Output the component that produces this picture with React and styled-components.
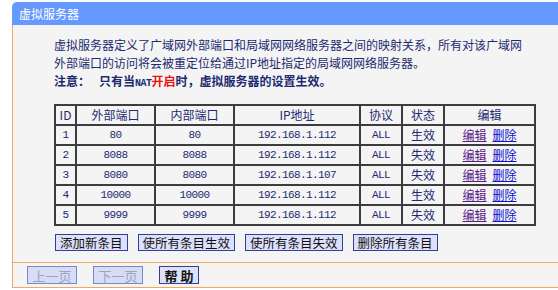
import React from 'react'
import styled, { createGlobalStyle } from 'styled-components'

const GlobalStyle = createGlobalStyle`
  body {
    margin: 0;
    background: #fff;
    font-family: "Noto Sans CJK SC", "Liberation Sans", sans-serif;
    overflow: hidden;
  }
`

const Panel = styled.div`
  margin: 2px 0 0 12px;
  width: 546px;
`

const TitleBar = styled.div`
  height: 23px;
  background: #6699ff;
  border-top-left-radius: 5px;
  color: #fff;
  font-size: 12px;
  line-height: 23px;
  padding-left: 7px;
`

const Body = styled.div`
  background: #f4f4f4;
  border-left: 1px solid #f0a860;
  padding: 11px 0 0 41px;
  color: #1c2a70;
`

const Desc = styled.div`
  font-size: 12px;
  line-height: 18px;
  white-space: nowrap;
`

const Note = styled.div`
  font-weight: bold;
  display: flex;
  gap: 9px;
`

const Nat = styled.span`
  font-family: "Liberation Mono", monospace;
  font-size: 10px;
  font-weight: bold;
  letter-spacing: -0.5px;
`

const Red = styled.span`
  color: #ee1111;
`

const Table = styled.table`
  margin-top: 11px;
  width: 468px;
  table-layout: fixed;
  border-collapse: separate;
  border-spacing: 0;
  border: 1px solid #3c3c3c;
  font-size: 12px;
`

const Th = styled.th`
  width: ${p => p.$w}px;
  height: 18px;
  padding: 0;
  border: 1px solid #3c3c3c;
  font-weight: normal;
  line-height: 18px;
  text-align: center;
  color: #1c2a70;
  white-space: nowrap;
`

const Td = styled.td`
  height: 18px;
  padding: 0;
  border: 1px solid #3c3c3c;
  line-height: 18px;
  text-align: center;
  color: #1c2a70;
  white-space: nowrap;
  font-family: ${p => (p.$mono ? '"Liberation Mono", monospace' : 'inherit')};
  font-size: ${p => (p.$mono ? '11px' : '12px')};
  letter-spacing: ${p => (p.$mono ? '-0.6px' : '0')};
`

const Link = styled.a`
  color: ${p => (p.$visited ? '#5a1a8a' : '#1010d0')};
  text-decoration: underline;
  margin: 0 3px;
  cursor: pointer;
`

const ActionRow = styled.div`
  display: flex;
  gap: 10px;
  padding: 8px 0 11px 1px;
`

const Button = styled.button`
  height: ${p => (p.$nav ? 18 : 17)}px;
  padding: ${p => (p.$w ? '0' : '0 4px')};
  background: ${p => (p.$disabled ? '#d8dcf4' : '#dde0fa')};
  border: 1px solid ${p => (p.$disabled ? '#7a88c8' : '#33408f')};
  color: ${p => (p.$disabled ? '#9aa2cc' : '#111')};
  font-family: "Noto Sans CJK SC", sans-serif;
  font-size: ${p => (p.$nav ? 13 : 12.5)}px;
  font-weight: ${p => (p.$bold ? 'bold' : 'normal')};
  line-height: 15px;
  white-space: nowrap;
  width: ${p => (p.$w ? `${p.$w}px` : 'auto')};
  border-radius: 0;
`

const NavBar = styled.div`
  display: flex;
  gap: 16px;
  background: #f4f4f4;
  border-left: 1px solid #f0a860;
  border-top: 1px solid #f0a860;
  border-bottom: 1px solid #f0a860;
  padding: 3px 0 3px 14px;
`

const rows = [
  [1, '80', '80', '192.168.1.112', 'ALL', '生效'],
  [2, '8088', '8088', '192.168.1.112', 'ALL', '失效'],
  [3, '8080', '8080', '192.168.1.107', 'ALL', '失效'],
  [4, '10000', '10000', '192.168.1.112', 'ALL', '生效'],
  [5, '9999', '9999', '192.168.1.112', 'ALL', '失效'],
]

export default function App() {
  return (
    <>
      <GlobalStyle />
      <Panel>
        <TitleBar>虚拟服务器</TitleBar>
        <Body>
          <Desc>
            虚拟服务器定义了广域网外部端口和局域网网络服务器之间的映射关系，所有对该广域网
            <br />
            外部端口的访问将会被重定位给通过IP地址指定的局域网网络服务器。
            <Note>
              <span>注意：</span>
              <span>
                只有当<Nat>NAT</Nat>
                <Red>开启</Red>时，虚拟服务器的设置生效。
              </span>
            </Note>
          </Desc>
          <Table>
            <thead>
              <tr>
                <Th $w={19}>ID</Th>
                <Th $w={77}>外部端口</Th>
                <Th $w={77}>内部端口</Th>
                <Th $w={124}>IP地址</Th>
                <Th $w={40}>协议</Th>
                <Th $w={40}>状态</Th>
                <Th $w={89}>编辑</Th>
              </tr>
            </thead>
            <tbody>
              {rows.map(r => (
                <tr key={r[0]}>
                  <Td $mono>{r[0]}</Td>
                  <Td $mono>{r[1]}</Td>
                  <Td $mono>{r[2]}</Td>
                  <Td $mono>{r[3]}</Td>
                  <Td $mono>{r[4]}</Td>
                  <Td>{r[5]}</Td>
                  <Td>
                    <Link $visited>编辑</Link>
                    <Link>删除</Link>
                  </Td>
                </tr>
              ))}
            </tbody>
          </Table>
          <ActionRow>
            <Button>添加新条目</Button>
            <Button>使所有条目生效</Button>
            <Button>使所有条目失效</Button>
            <Button>删除所有条目</Button>
          </ActionRow>
        </Body>
        <NavBar>
          <Button $nav $disabled $w={50}>上一页</Button>
          <Button $nav $disabled $w={50}>下一页</Button>
          <Button $nav $bold $w={40}>帮 助</Button>
        </NavBar>
      </Panel>
    </>
  )
}
